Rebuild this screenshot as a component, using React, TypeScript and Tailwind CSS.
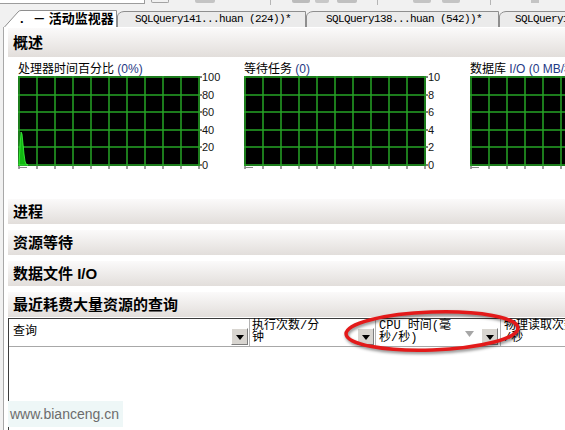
import React from "react";

const SANS = "font-['Liberation_Sans','Noto_Sans_CJK_SC',sans-serif]";
const MONO = "font-['Liberation_Mono','Noto_Sans_CJK_SC',monospace]";

function TabShape({ w, h, active }: { w: number; h: number; active?: boolean }) {
  const d = active
    ? `M0.5 ${h} L14 2 Q15 0.5 17 0.5 L${w - 0.5} 0.5 L${w - 0.5} ${h}`
    : `M0.5 ${h} L0.5 5 Q1.5 1 7 0.5 L${w - 0.5} 0.5 L${w - 0.5} ${h}`;
  return (
    <svg width={w} height={h} className="absolute inset-0">
      <path d={d} fill={active ? "#ffffff" : "#ebebeb"} stroke="#8e8e8e" strokeWidth="1" />
    </svg>
  );
}

function DropBtn() {
  return (
    <div className="w-[17px] h-[17px] shrink-0 flex items-center justify-center bg-[#d8d5d0] border border-t-white border-l-white border-r-[#7d7d7d] border-b-[#7d7d7d]">
      <svg width="8" height="5" className="mt-[2px]">
        <path d="M0 0 L8 0 L4 5 Z" fill="#000" />
      </svg>
    </div>
  );
}

function Chart({ title, labels, spike }: { title: React.ReactNode; labels: string[]; spike?: boolean }) {
  const cols = Array.from({ length: 11 }, (_, i) => 1 + i * 18);
  const rows = [1, 19, 36, 54, 71, 89];
  return (
    <div className="w-[226px] shrink-0">
      <div className="h-[14px] text-[12px] leading-[14px] text-black whitespace-nowrap">{title}</div>
      <div className="flex">
        <svg width="184" height="93" className="block shrink-0">
          <rect x="0" y="0" width="182" height="90" fill="#000" />
          {cols.map((x) => (
            <line key={"v" + x} x1={x} y1="0" x2={x} y2="90" stroke="#26a626" strokeWidth="1.5" />
          ))}
          {rows.map((y) => (
            <line key={"h" + y} x1="0" y1={y} x2="182" y2={y} stroke="#26a626" strokeWidth="1.5" />
          ))}
          {cols.map((x) => (
            <line key={"t" + x} x1={x} y1="90" x2={x} y2="93" stroke="#3a3a3a" strokeWidth="1" />
          ))}
          {rows.map((y) => (
            <line key={"a" + y} x1="182" y1={y} x2="184" y2={y} stroke="#000" strokeWidth="1" />
          ))}
          <line x1="1" y1="91.5" x2="9" y2="91.5" stroke="#8a8a8a" strokeWidth="1" />
          {spike && (
            <polygon
              points="1,89 2,70 3,56 4,58 5,68 6,78 7,85 8,88 10,89"
              fill="#12b812"
              stroke="#3cff3c"
              strokeWidth="0.8"
            />
          )}
        </svg>
        <div className="flex flex-col justify-between h-[100px] -mt-[5px] text-[11px] leading-[12px] text-[#141414]">
          {labels.map((l) => (
            <div key={l} className="h-[12px]">
              {l}
            </div>
          ))}
        </div>
      </div>
    </div>
  );
}

function SectionBar({ children, className }: { children: React.ReactNode; className: string }) {
  return (
    <div
      className={`ml-[4px] pl-[5px] bg-gradient-to-b from-[#fbfafa] to-[#e2dedb] text-[15px] font-bold text-black whitespace-nowrap ${className}`}
    >
      {children}
    </div>
  );
}

export default function App() {
  return (
    <div className={`relative w-[565px] h-[430px] overflow-hidden bg-[#f1f1f1] flex flex-col ${SANS}`}>
      {/* toolbar remnant */}
      <div className="h-[5px] flex items-start shrink-0">
        <div className="w-[145px] h-[4px] bg-white border-b border-r border-[#9c9c9c]" />
        <div className="ml-[6px] w-[18px] h-[3px] border-b border-x border-[#a3a3a3] rounded-b-[2px]" />
        <div className="ml-[26px] w-[20px] h-[3px] bg-[#c4c4c4] rounded-b-[2px]" />
        <div className="ml-[55px] w-[1px] h-[5px] bg-[#b5b5b5]" />
        <div className="ml-[21px] w-[18px] h-[3px] bg-[#bcbcbc] rounded-b-[2px]" />
        <div className="ml-[5px] w-[14px] h-[3px] bg-[#c8c8c8] rounded-b-[2px]" />
        <div className="ml-[8px] w-[20px] h-[3px] bg-[#c0c0c0] rounded-b-[2px]" />
        <div className="ml-[20px] w-[1px] h-[5px] bg-[#b5b5b5]" />
        <div className="ml-[35px] w-[18px] h-[3px] bg-[#c4c4c4] rounded-b-[2px]" />
        <div className="ml-[11px] w-[18px] h-[3px] bg-[#c4c4c4] rounded-b-[2px]" />
        <div className="ml-[30px] w-[1px] h-[5px] bg-[#b5b5b5]" />
        <div className="ml-[40px] w-[8px] h-[3px] bg-[#c4c4c4]" />
      </div>

      {/* tab strip */}
      <div className="h-[22px] flex items-end pl-[4px] shrink-0">
        <div className="relative w-[113px] h-[17px] shrink-0 z-10">
          <TabShape w={113} h={17} active />
          <div className="relative text-[13px] font-bold leading-[17px] text-black whitespace-nowrap">
            <span className="ml-[16px]">.</span>
            <span className="ml-[9px]">－</span>
            <span className="ml-[3px]">活动监视器</span>
          </div>
        </div>
        <div className="relative w-[189px] h-[16px] shrink-0">
          <TabShape w={189} h={16} />
          <div className={`relative pl-[18px] text-[11px] tracking-[-0.6px] leading-[16px] text-black whitespace-nowrap ${MONO}`}>
            SQLQuery141...huan (224))*
          </div>
        </div>
        <div className="relative w-[193px] h-[16px] shrink-0">
          <TabShape w={193} h={16} />
          <div className={`relative pl-[20px] text-[11px] tracking-[-0.6px] leading-[16px] text-black whitespace-nowrap ${MONO}`}>
            SQLQuery138...huan (542))*
          </div>
        </div>
        <div className="relative w-[120px] h-[16px] shrink-0">
          <TabShape w={120} h={16} />
          <div className={`relative pl-[16px] text-[11px] tracking-[-0.6px] leading-[16px] text-black whitespace-nowrap ${MONO}`}>
            SQLQuery142...huan (61))*
          </div>
        </div>
      </div>

      {/* content */}
      <div className="flex-1 flex flex-col ml-[3px] border-l border-[#a8a8a8] bg-white min-h-0">
        <SectionBar className="mt-[1px] h-[29px] leading-[29px]">概述</SectionBar>

        <div className="flex pl-[14px] mt-[5px]">
          <Chart
            title={
              <>
                处理器时间百分比 <span className="text-[#1f3a86]">(0%)</span>
              </>
            }
            labels={["100", "80", "60", "40", "20", "0"]}
            spike
          />
          <Chart
            title={
              <>
                等待任务 <span className="text-[#1f3a86]">(0)</span>
              </>
            }
            labels={["10", "8", "6", "4", "2", "0"]}
          />
          <Chart
            title={
              <>
                数据库 <span className="text-[#1f3a86]">I/O (0 MB/秒)</span>
              </>
            }
            labels={["10", "8", "6", "4", "2", "0"]}
          />
        </div>

        <SectionBar className="mt-[28px] h-[25px] leading-[25px]">进程</SectionBar>
        <SectionBar className="mt-[6px] h-[25px] leading-[25px]">资源等待</SectionBar>
        <SectionBar className="mt-[6px] h-[25px] leading-[25px]">数据文件 I/O</SectionBar>
        <SectionBar className="mt-[6px] h-[25px] leading-[25px]">最近耗费大量资源的查询</SectionBar>

        {/* query table */}
        <div className={`flex-1 ml-[4px] mt-[1px] border-l border-t border-[#3c3c3c] bg-white ${MONO}`}>
          <div className="flex h-[28px] border-b border-[#a8a8a8] text-[12px] leading-[12px] text-black">
            <div className="w-[241px] shrink-0 flex items-end justify-between border-r border-[#b4b4b4] pl-[4px] pr-[1px] pb-[1px]">
              <div className="self-center">查询</div>
              <DropBtn />
            </div>
            <div className="w-[126px] shrink-0 flex items-end justify-between border-r border-[#b4b4b4] pl-[2px] pr-[1px] pb-[1px]">
              <div className="self-start pt-[1px] whitespace-nowrap">
                执行次数/分
                <br />钟
              </div>
              <DropBtn />
            </div>
            <div className="w-[125px] shrink-0 flex items-end border-r border-[#b4b4b4] pl-[3px] pr-[2px] pb-[1px]">
              <div className="self-start pt-[1px] whitespace-nowrap">
                CPU 时间(毫
                <br />秒/秒)
              </div>
              <svg width="9" height="6" className="ml-auto mr-[7px] mb-[8px] shrink-0">
                <path d="M0 0 L9 0 L4.5 6 Z" fill="#a6a6a6" />
              </svg>
              <DropBtn />
            </div>
            <div className="flex-1 pl-[3px] pt-[1px] whitespace-nowrap">
              物理读取次数
              <br />/秒
            </div>
          </div>
        </div>
      </div>

      {/* red highlight ellipse */}
      <svg
        width="184"
        height="48"
        className="absolute left-[340px] top-[307px] drop-shadow-[1px_2px_1.5px_rgba(0,0,0,0.45)]"
      >
        <ellipse cx="92" cy="24" rx="86" ry="19" fill="none" stroke="#e31a1a" strokeWidth="3.5" transform="rotate(-2 92 24)" />
      </svg>

      {/* watermark */}
      <div className="absolute left-[8px] top-[401px] w-[115px] h-[26px] bg-[#eef7f7] pl-[2px] text-[14px] leading-[26px] text-[#6c6c6c] font-['Liberation_Sans',sans-serif]">
        www.bianceng.cn
      </div>
    </div>
  );
}
